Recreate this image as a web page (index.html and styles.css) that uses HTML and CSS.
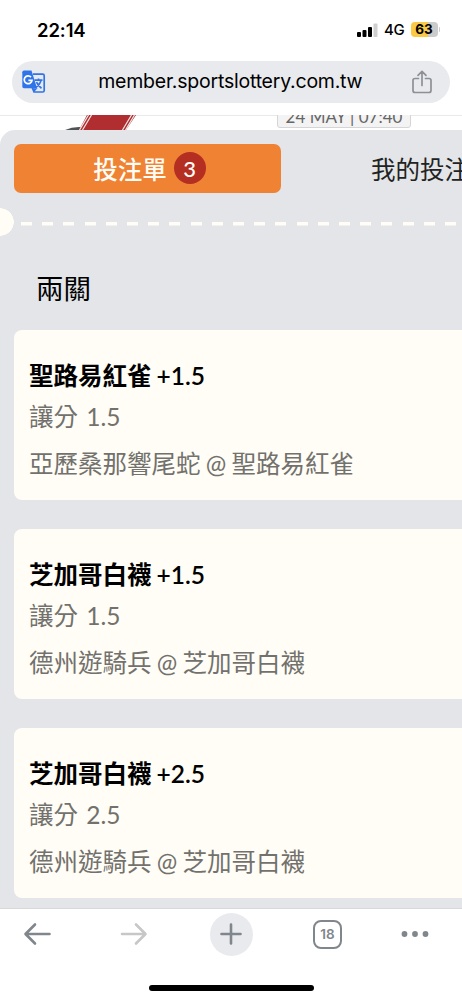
FILE: index.html
```html
<!DOCTYPE html>
<html lang="zh-TW">
<head>
    <meta charset="UTF-8">
    <meta name="viewport" content="width=device-width, initial-scale=1.0">
    <title>投注單</title>
    <link rel="stylesheet" href="styles.css">
</head>
<body>
    <header class="status-bar">
        <span class="time">22:14</span>
        <div class="status-icons">
            <svg class="signal" width="21" height="14" viewBox="0 0 21 14">
                <rect x="0" y="9" width="4" height="5" rx="1"/>
                <rect x="5.5" y="7" width="4" height="7" rx="1"/>
                <rect x="11" y="4" width="4" height="10" rx="1"/>
                <rect x="16.5" y="0.5" width="4" height="13.5" rx="1" fill="#cfcfcf"/>
            </svg>
            <span class="network">4G</span>
            <span class="battery">63</span>
            <span class="battery-tip"></span>
        </div>
    </header>

    <div class="url-bar">
        <svg class="translate" width="24" height="24" viewBox="0 0 24 24">
            <path d="M11 4.2h9.7q1.5 0 1.5 1.5v14.8q0 1.5-1.5 1.5H12l-2-5" fill="#e8eaee" stroke="#2f74e8" stroke-width="1.7"/>
            <path d="M2 .5h7.5l5.5 17.7H2q-1.7 0-1.7-1.7V2.2Q.3.5 2 .5z" fill="#2f74e8"/>
            <path d="M11 18.2h4.6L12 22z" fill="#2f74e8"/>
            <path d="M9 7.1a3.9 3.9 0 1 0 1 3.300H6.400" fill="none" stroke="#fff" stroke-width="1.7"/>
            <path d="M12.5 10.2h8M16.5 8.5v1.7M19 10.2q-.8 4.3-5 7M14.5 12.2q1.5 3.5 5 6" fill="none" stroke="#2f74e8" stroke-width="1.7"/>
        </svg>
        <span class="url">member.sportslottery.com.tw</span>
        <svg class="share" width="20" height="24" viewBox="0 0 20 24" fill="none" stroke="#8d9196" stroke-width="1.7" stroke-linecap="round" stroke-linejoin="round">
            <path d="M6.500 8.500H3q-2 0-2 2v10q0 2 2 2h14q2 0 2-2v-10q0-2-2-2h-3.500M10 15.500V1.500M6 5.300l4-4 4 4"/>
        </svg>
    </div>

    <div class="page-behind">
        <svg class="jersey" width="80" height="15" viewBox="0 0 80 15">
            <path d="M4 15q13-6 30 0z" fill="#505356"/>
            <path d="M26 0h49L65 15H18z" fill="#b02e30"/>
            <path d="M27.500 0l-9 15M30.500 0l-9 15M70.500 0l-9 15M73.500 0l-9 15" stroke="#f1e7e7" stroke-width="1.2"/>
        </svg>
        <span class="match-date">24 MAY | 07:40</span>
    </div>

    <main class="sheet">
        <nav class="tabs">
            <div class="tab active">投注單 <span class="count">3</span></div>
            <div class="tab">我的投注</div>
        </nav>

        <div class="divider"></div>

        <h1>兩關</h1>

        <section class="bet">
            <h2>聖路易紅雀 +1.5</h2>
            <p class="market">讓分 1.5</p>
            <p class="match">亞歷桑那響尾蛇 @ 聖路易紅雀</p>
        </section>
        <section class="bet">
            <h2>芝加哥白襪 +1.5</h2>
            <p class="market">讓分 1.5</p>
            <p class="match">德州遊騎兵 @ 芝加哥白襪</p>
        </section>
        <section class="bet">
            <h2>芝加哥白襪 +2.5</h2>
            <p class="market">讓分 2.5</p>
            <p class="match">德州遊騎兵 @ 芝加哥白襪</p>
        </section>
    </main>

    <footer class="toolbar">
        <div class="buttons">
            <svg class="back" width="28" height="24" viewBox="0 0 28 24" fill="none" stroke="#80868b" stroke-width="2.6" stroke-linecap="round" stroke-linejoin="round">
                <path d="M26.500 12H3.500M12 2.500L2.500 12l9.500 9.500"/>
            </svg>
            <svg class="forward" width="28" height="24" viewBox="0 0 28 24" fill="none" stroke="#c7c7c7" stroke-width="2.6" stroke-linecap="round" stroke-linejoin="round">
                <path d="M2 12h23M16 2.500l9.500 9.500-9.500 9.500"/>
            </svg>
            <div class="new-tab">
                <svg width="24" height="24" viewBox="0 0 24 24" stroke="#80868b" stroke-width="2.6" stroke-linecap="round">
                    <path d="M12 2.500v19M2.500 12h19"/>
                </svg>
            </div>
            <div class="tab-count">18</div>
            <svg class="more" width="28" height="8" viewBox="0 0 28 8" fill="#80868b">
                <circle cx="3.5" cy="4" r="2.9"/>
                <circle cx="14" cy="4" r="2.9"/>
                <circle cx="24.5" cy="4" r="2.9"/>
            </svg>
        </div>
        <div class="home-indicator"></div>
    </footer>
</body>
</html>
```
FILE: styles.css
```css
* {
    box-sizing: border-box;
}
body {
    margin: 0;
    height: 1000px;
    overflow: hidden;
    display: flex;
    flex-direction: column;
    background-color: #fff;
    font-family: Lato, "Noto Sans CJK TC", sans-serif;
}
h1, h2, p {
    margin: 0;
}

/* status bar */
.status-bar {
    height: 60px;
    flex-shrink: 0;
    padding: 0 22px 1px 37px;
    display: flex;
    align-items: center;
    justify-content: space-between;
    font-family: Inter, sans-serif;
}
.time {
    font-size: 18.5px;
    font-weight: 600;
    letter-spacing: -0.1px;
}
.status-icons {
    display: flex;
    align-items: center;
}
.network {
    margin: 0 6px;
    font-size: 15px;
    font-weight: 500;
    letter-spacing: -0.3px;
}
.battery {
    width: 27px;
    height: 15px;
    border-radius: 4px;
    background: linear-gradient(90deg, #f8ca45 63%, #cbcbcb 63%);
    font-size: 13.5px;
    font-weight: 700;
    line-height: 15px;
    text-align: center;
}
.battery-tip {
    width: 1.5px;
    height: 5px;
    margin-left: 1px;
    border-radius: 0 2px 2px 0;
    background-color: #cbcbcb;
}

/* browser address */
.url-bar {
    height: 42px;
    flex-shrink: 0;
    margin: 0.5px 12px 12px;
    padding: 0 18px 0 9.5px;
    display: flex;
    align-items: center;
    justify-content: space-between;
    border-radius: 21px;
    background-color: #e8eaee;
}
.url {
    margin-left: 3px;
    padding-bottom: 1px;
    font-family: Inter, sans-serif;
    font-size: 19.5px;
    letter-spacing: -0.22px;
}

.page-behind {
    height: 15px;
    flex-shrink: 0;
    overflow: hidden;
    padding: 0 51px 0 61px;
    display: flex;
    justify-content: space-between;
    align-items: flex-end;
    box-shadow: inset 0 1px #e9e9e9;
}
.match-date {
    width: 134px;
    height: 26px;
    margin-bottom: 2px;
    border: 1px solid #d5d5d5;
    border-radius: 3px;
    background-color: #f3f3f3;
    color: #666;
    font-size: 17px;
    line-height: 27px;
    text-align: center;
}

/* bet slip */
.sheet {
    height: 778px;
    flex-shrink: 0;
    overflow: hidden;
    padding: 14px 0 0 14px;
    border-radius: 15px 0 0 0;
    background-color: #e3e5e8;
}
.tabs {
    display: flex;
    height: 49.5px;
}
.tab {
    width: 267px;
    flex-shrink: 0;
    display: flex;
    align-items: center;
    justify-content: center;
    font-size: 24.5px;
    color: #222;
}
.tab.active {
    padding-left: 4px;
    border-radius: 7px;
    background-color: #ef8233;
    color: #fffdf5;
    font-weight: 500;
}
.tab + .tab {
    width: 278px;
}
.count {
    width: 32px;
    height: 32px;
    margin-left: 7px;
    border-radius: 50%;
    background-color: #b52e22;
    font-size: 22px;
    line-height: 33px;
    text-align: center;
}
.divider {
    height: 28px;
    margin: 14.5px 0 0 -14px;
    background:
        radial-gradient(circle at 0 14px, #fffdf5 13.5px, transparent 14px) 0 0 / 20px 28px no-repeat,
        repeating-linear-gradient(90deg, #fffdf5 0 11px, transparent 11px 21.2px) 21px 14px / 441px 3.5px no-repeat;
}
h1 {
    margin-left: 22px;
    height: 94px;
    font-size: 27.5px;
    font-weight: 400;
    line-height: 105px;
}
.bet {
    height: 170.7px;
    margin-bottom: 28.4px;
    padding: 25.4px 15px 0;
    border-radius: 8px 0 0 8px;
    background-color: #fffdf5;
    font-size: 24.5px;
    white-space: nowrap;
}
.bet h2 {
    font-size: 24.5px;
    font-weight: 600;
    line-height: 41px;
    word-spacing: -1px;
}
.bet .market {
    color: #72716d;
    line-height: 41px;
    word-spacing: 2px;
}
.bet .match {
    color: #72716d;
    line-height: 53px;
    word-spacing: -1px;
}

/* browser toolbar */
.toolbar {
    height: 93px;
    flex-shrink: 0;
    border-top: 1px solid #d8d8d8;
    background-color: #fff;
}
.buttons {
    height: 51px;
    padding-left: 23px;
    display: flex;
    align-items: center;
}
.forward {
    margin-left: 69px;
}
.new-tab {
    width: 43px;
    height: 43px;
    margin-left: 61.5px;
    display: flex;
    align-items: center;
    justify-content: center;
    border-radius: 50%;
    background-color: #e8eaee;
}
.tab-count {
    width: 29px;
    height: 29px;
    margin-left: 60.5px;
    border: 2px solid #80868b;
    border-radius: 8px;
    color: #80868b;
    font-family: Inter, sans-serif;
    font-size: 13.5px;
    font-weight: 600;
    line-height: 25px;
    text-align: center;
}
.more {
    margin-left: 59px;
}
.home-indicator {
    width: 165px;
    height: 6px;
    margin: 25px auto 0;
    border-radius: 3px;
    background-color: #000;
}
```
